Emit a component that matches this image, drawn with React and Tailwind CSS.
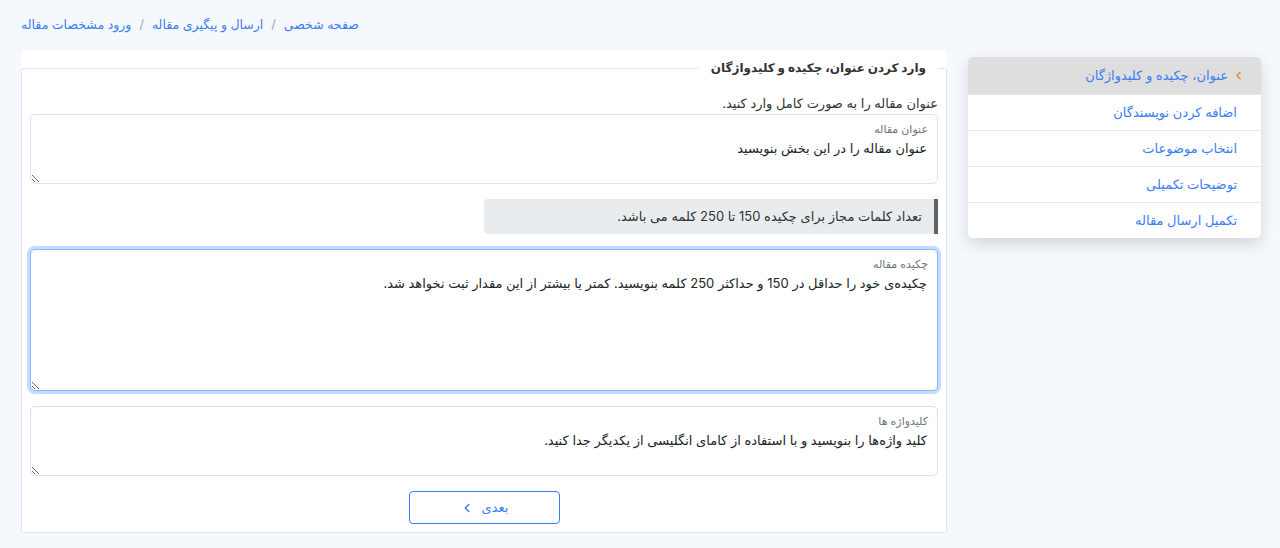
import { ChevronLeft } from "lucide-react"

const crumbs = ["صفحه شخصی", "ارسال و پیگیری مقاله", "ورود مشخصات مقاله"]

const steps = [
  "اضافه کردن نویسندگان",
  "انتخاب موضوعات",
  "توضیحات تکمیلی",
  "تکمیل ارسال مقاله",
]

function FloatingField({ label, placeholder, tall, focused }) {
  return (
    <div className="relative">
      <textarea
        dir="rtl"
        placeholder={placeholder}
        className={
          (tall ? "h-[142px] " : "h-[70px] ") +
          (focused
            ? "border-[#86b7fe] shadow-[0_0_0_3px_rgba(13,110,253,0.25)] "
            : "border-[#dee2e6] ") +
          "block w-full rounded-[5px] border bg-white px-[10px] pt-[23px] text-[13px] leading-[20px] text-[#212529] outline-none placeholder:text-[#212529]"
        }
      />
      <label className="absolute right-[10px] top-[8px] text-[11px] leading-[14px] text-[#6c757d]">
        {label}
      </label>
    </div>
  )
}

export default function App() {
  return (
    <div
      dir="rtl"
      className="min-h-screen bg-[#f5f8fd] pl-[21px] pr-[19px] pt-[15px] text-[13px]"
      style={{ fontFamily: "Inter, 'DejaVu Sans', sans-serif" }}
    >
      <nav className="flex justify-end">
        <ol className="flex items-center gap-[8px] text-[12.5px] leading-[20px]">
          {crumbs.map((c, i) => (
            <li key={c} className="flex items-center gap-[8px]">
              {i > 0 && <span className="text-[#9ca3af]">/</span>}
              <a className="text-[#3b7ef2]">{c}</a>
            </li>
          ))}
        </ol>
      </nav>

      <div className="mt-[15px] flex items-start gap-[21px]">
        <aside className="mt-[7px] w-[293px] shrink-0 overflow-hidden rounded-[5px] bg-white shadow-[0_6px_16px_rgba(0,0,0,0.14)]">
          <div className="flex h-[37px] items-center gap-[4px] bg-[#dedede] pr-[16px] text-[#3b7ef2]">
            <ChevronLeft className="h-[13px] w-[13px] text-[#f08a24]" strokeWidth={2.5} />
            <span>عنوان، چکیده و کلیدواژگان</span>
          </div>
          {steps.map((s) => (
            <div
              key={s}
              className="flex h-[36px] items-center border-t border-[#e5e7eb] pr-[24px] text-[#3b7ef2]"
            >
              {s}
            </div>
          ))}
        </aside>

        <main className="flex-1 bg-white">
          <fieldset className="rounded-[2px] border border-[#e3e6ea] px-[8px] pb-[8px]">
            <legend className="px-[12px] py-[8px] text-[12px] font-bold leading-[20px] text-[#333]">
              وارد کردن عنوان، چکیده و کلیدواژگان
            </legend>

            <p className="mt-[7px] leading-[20px] text-[#333]">
              عنوان مقاله را به صورت کامل وارد کنید.
            </p>
            <div className="mt-[1px]">
              <FloatingField label="عنوان مقاله" placeholder="عنوان مقاله را در این بخش بنویسید" />
            </div>

            <div className="mt-[15px] flex">
              <div className="flex h-[35px] w-1/2 items-center rounded-l-[4px] border-r-4 border-[#5f6368] bg-[#e9ecef] pr-[12px] text-[#333]">
                تعداد کلمات مجاز برای چکیده 150 تا 250 کلمه می باشد.
              </div>
            </div>

            <div className="mt-[15px]">
              <FloatingField
                label="چکیده مقاله"
                placeholder="چکیده‌ی خود را حداقل در 150 و حداکثر 250 کلمه بنویسید. کمتر یا بیشتر از این مقدار ثبت نخواهد شد."
                tall
                focused
              />
            </div>

            <div className="mt-[15px]">
              <FloatingField
                label="کلیدواژه ها"
                placeholder="کلید واژه‌ها را بنویسید و با استفاده از کامای انگلیسی از یکدیگر جدا کنید."
              />
            </div>

            <div className="mt-[15px] flex justify-center">
              <button className="flex h-[33px] w-[151px] items-center justify-center gap-[8px] rounded-[4px] border border-[#3b7ef2] bg-white text-[#3b7ef2]">
                <span>بعدی</span>
                <ChevronLeft className="h-[14px] w-[14px]" strokeWidth={2.5} />
              </button>
            </div>
          </fieldset>
        </main>
      </div>
    </div>
  )
}
